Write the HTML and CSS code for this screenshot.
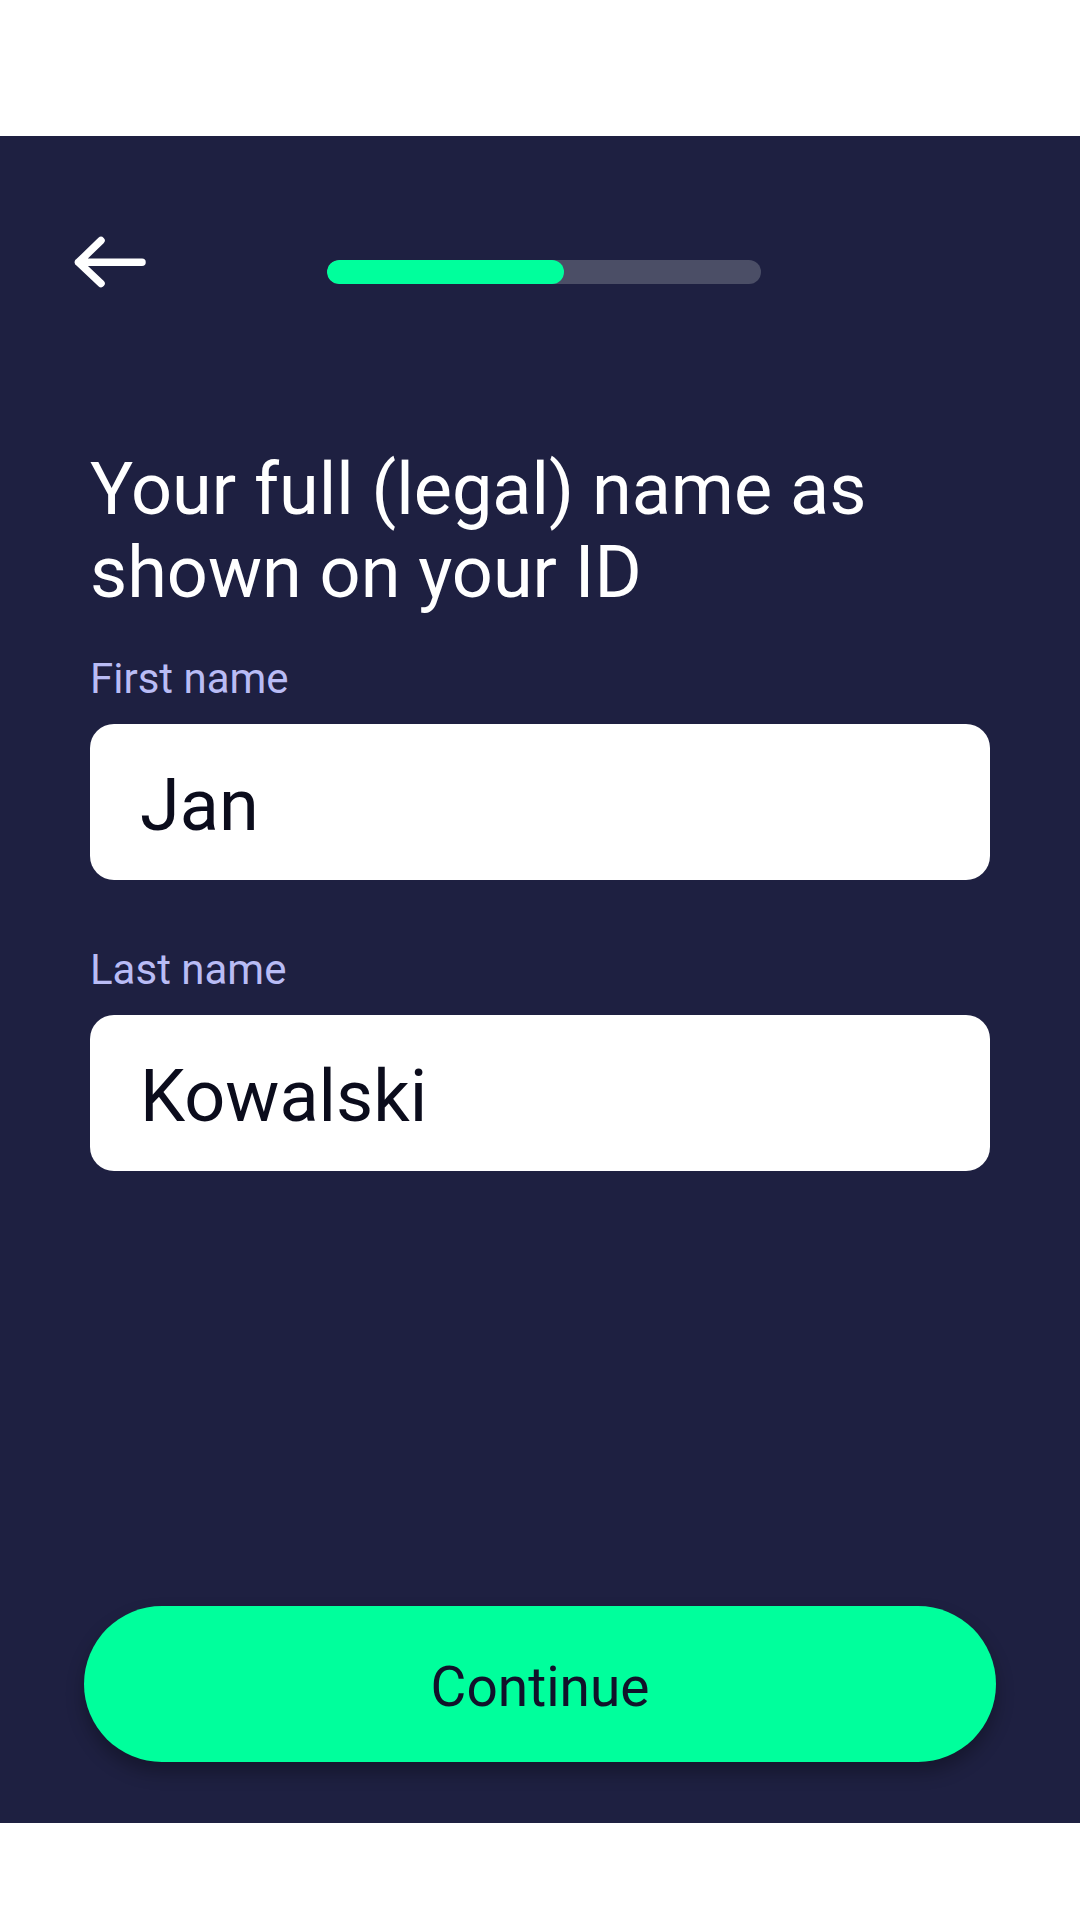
FILE: index.html
```html
<!DOCTYPE html>
<html lang="en">
<head>
<meta charset="utf-8">
<title>Your name</title>
<link rel="stylesheet" href="styles.css">
</head>
<body>
<div class="screen">
  <div class="panel">
    <div class="header">
      <svg class="back" width="80" height="60" viewBox="0 0 80 60" aria-label="Back">
        <path d="M8.5 29.3 H72 M31 7.5 L8.5 29.3 L31 50.5" fill="none" stroke="#ffffff" stroke-width="7.5" stroke-linecap="round" stroke-linejoin="round"/>
      </svg>
      <div class="progress"><div class="progress-fill"></div></div>
    </div>
    <h1 class="title">Your full (legal) name as shown on your ID</h1>
    <label class="label label-first">First name</label>
    <div class="field">Jan</div>
    <label class="label label-last">Last name</label>
    <div class="field">Kowalski</div>
    <button class="continue">Continue</button>
  </div>
</div>
</body>
</html>
```

FILE: styles.css
```css
html, body {
  margin: 0;
  padding: 0;
  background: #ffffff;
}
body {
  width: 1080px;
  height: 1920px;
  font-family: Roboto, "Noto Sans", "Liberation Sans", sans-serif;
}
.screen {
  padding-top: 136px;
  height: 1920px;
  box-sizing: border-box;
}
.panel {
  height: 1687px;
  box-sizing: border-box;
  background: #1e2041;
  display: flex;
  flex-direction: column;
  padding: 0 90px 61px 90px;
}
.header {
  display: flex;
  align-items: flex-start;
  margin-top: 97px;
  margin-left: -20px;
  height: 60px;
}
.back {
  display: block;
  flex: none;
}
.progress {
  margin-left: 177px;
  margin-top: 27px;
  width: 434px;
  height: 24px;
  border-radius: 12px;
  background: #4b4e66;
  overflow: hidden;
}
.progress-fill {
  width: 237px;
  height: 24px;
  border-radius: 12px;
  background: #00ff9c;
}
.title {
  margin: 155px 0 0 0;
  font-size: 72px;
  line-height: 83px;
  font-weight: 400;
  color: #ffffff;
  width: 840px;
}
.label {
  display: block;
  font-size: 42px;
  line-height: 49px;
  color: #b9bcf5;
  margin-bottom: 21px;
}
.label-first {
  margin-top: 40px;
}
.label-last {
  margin-top: 65px;
}
.field {
  height: 156px;
  box-sizing: border-box;
  background: #ffffff;
  border-radius: 24px;
  padding: 8px 48px 0 50px;
  font-size: 72px;
  line-height: 148px;
  color: #0b0c1c;
}
.continue {
  margin: auto -6px 0 -6px;
  height: 156px;
  border: none;
  border-radius: 78px;
  background: #00ff9c;
  box-shadow: 0 10px 18px rgba(0, 0, 0, 0.3);
  font-family: Roboto, "Noto Sans", "Liberation Sans", sans-serif;
  font-size: 55px;
  line-height: 150px;
  padding: 6px 0 0 0;
  color: #11122a;
  text-align: center;
}
```
